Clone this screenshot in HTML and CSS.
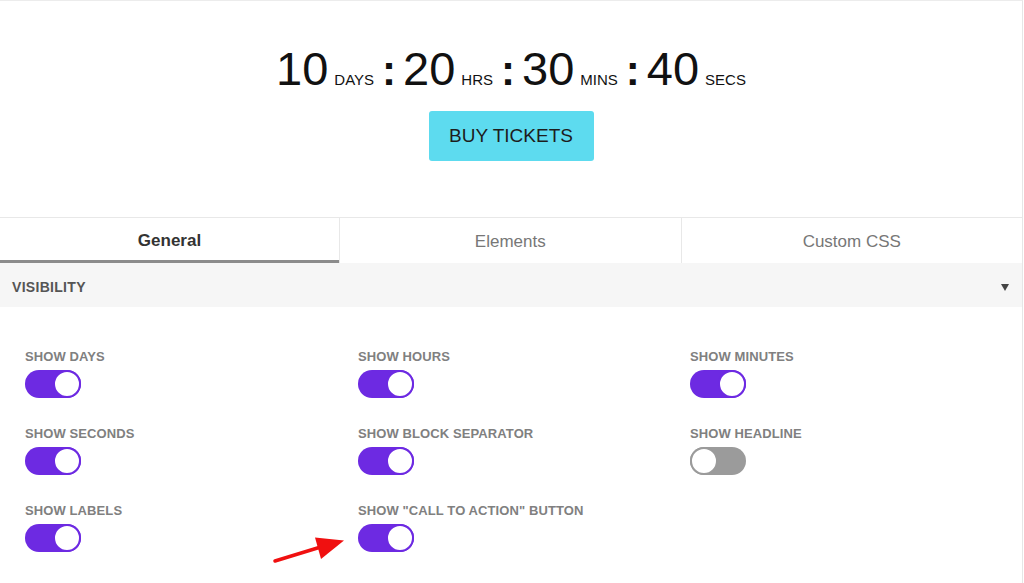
FILE: index.html
```html
<!DOCTYPE html>
<html>
<head>
<meta charset="utf-8">
<link rel="stylesheet" href="styles.css">
</head>
<body>
<div class="panel">
  <section class="hero">
    <div class="countdown">
      <span class="num">10</span><span class="unit">DAYS</span><span class="sep">:</span>
      <span class="num">20</span><span class="unit">HRS</span><span class="sep">:</span>
      <span class="num">30</span><span class="unit">MINS</span><span class="sep">:</span>
      <span class="num">40</span><span class="unit">SECS</span>
    </div>
    <button class="cta">BUY TICKETS</button>
  </section>

  <nav class="tabs">
    <div class="tab active">General</div>
    <div class="tab">Elements</div>
    <div class="tab">Custom CSS</div>
  </nav>

  <div class="section-head">
    <span>VISIBILITY</span>
    <span class="caret"></span>
  </div>

  <div class="options">
    <div class="opt"><div class="label">SHOW DAYS</div><div class="toggle on"><span class="knob"></span></div></div>
    <div class="opt"><div class="label">SHOW HOURS</div><div class="toggle on"><span class="knob"></span></div></div>
    <div class="opt"><div class="label">SHOW MINUTES</div><div class="toggle on"><span class="knob"></span></div></div>
    <div class="opt"><div class="label">SHOW SECONDS</div><div class="toggle on"><span class="knob"></span></div></div>
    <div class="opt"><div class="label">SHOW BLOCK SEPARATOR</div><div class="toggle on"><span class="knob"></span></div></div>
    <div class="opt"><div class="label">SHOW HEADLINE</div><div class="toggle off"><span class="knob"></span></div></div>
    <div class="opt"><div class="label">SHOW LABELS</div><div class="toggle on"><span class="knob"></span></div></div>
    <div class="opt"><div class="label">SHOW "CALL TO ACTION" BUTTON</div><div class="toggle on"><span class="knob"></span></div></div>
  </div>

  <svg class="arrow" width="90" height="40" viewBox="0 0 90 40">
    <line x1="6" y1="31" x2="55" y2="16" stroke="#f01010" stroke-width="3.5" stroke-linecap="round"/>
    <polygon points="75,10.5 46,7.5 52,29" fill="#f01010"/>
  </svg>
</div>
</body>
</html>
```

FILE: styles.css
```css
* { box-sizing: border-box; }

html, body {
  margin: 0;
  padding: 0;
  background: #fff;
  font-family: "Liberation Sans", Arial, sans-serif;
}

.panel {
  position: relative;
  width: 1023px;
  height: 583px;
  border-top: 1px solid #ececec;
  border-right: 1px solid #e6e6e6;
  overflow: hidden;
}

.hero {
  height: 216px;
  padding-top: 44px;
  display: flex;
  flex-direction: column;
  align-items: center;
}

.countdown {
  display: flex;
  align-items: baseline;
  line-height: 1;
  color: #111;
}

.num {
  font-size: 47px;
}

.unit {
  font-size: 15px;
  margin-left: 6px;
}

.sep {
  font-size: 42px;
  font-weight: bold;
  margin: 0 7px 0 8px;
}

.cta {
  margin-top: 19px;
  width: 165px;
  height: 50px;
  border: none;
  border-radius: 3px;
  background: #5ddbef;
  color: #1d1d1d;
  font-family: "Liberation Sans", Arial, sans-serif;
  font-size: 19px;
  padding: 0;
}

.tabs {
  display: flex;
  border-top: 1px solid #e8e8e8;
  height: 46px;
}

.tab {
  flex: 1;
  display: flex;
  align-items: center;
  justify-content: center;
  font-size: 17px;
  color: #777;
  padding-top: 2px;
}

.tab + .tab {
  border-left: 1px solid #e8e8e8;
}

.tab.active {
  flex: 0 0 339px;
  font-weight: bold;
  color: #333;
  border-bottom: 3px solid #8c8c8c;
  padding-top: 3px;
}

.section-head {
  height: 44px;
  background: #f6f6f6;
  display: flex;
  align-items: center;
  justify-content: space-between;
  padding: 4px 12px 0;
  font-size: 14px;
  font-weight: bold;
  color: #555;
  letter-spacing: 0.3px;
}

.caret {
  width: 0;
  height: 0;
  border-left: 4.5px solid transparent;
  border-right: 4.5px solid transparent;
  border-top: 7px solid #444;
  margin-right: 1px;
}

.options {
  display: grid;
  grid-template-columns: 333px 332px 333px;
  row-gap: 28px;
  padding: 42px 25px 0;
}

.label {
  font-size: 13px;
  line-height: 16px;
  font-weight: bold;
  color: #808080;
  letter-spacing: 0.1px;
}

.toggle {
  margin-top: 5px;
  width: 56px;
  height: 28px;
  border-radius: 14px;
  display: flex;
  align-items: center;
}

.toggle.on {
  background: #6d2ae2;
  justify-content: flex-end;
}

.toggle.off {
  background: #9b9b9b;
  justify-content: flex-start;
}

.knob {
  width: 28px;
  height: 28px;
  border-radius: 50%;
  background: #fff;
  border: 2px solid #6d2ae2;
}

.toggle.off .knob {
  border-color: #9b9b9b;
}

.arrow {
  position: absolute;
  left: 269px;
  top: 529px;
}
```
